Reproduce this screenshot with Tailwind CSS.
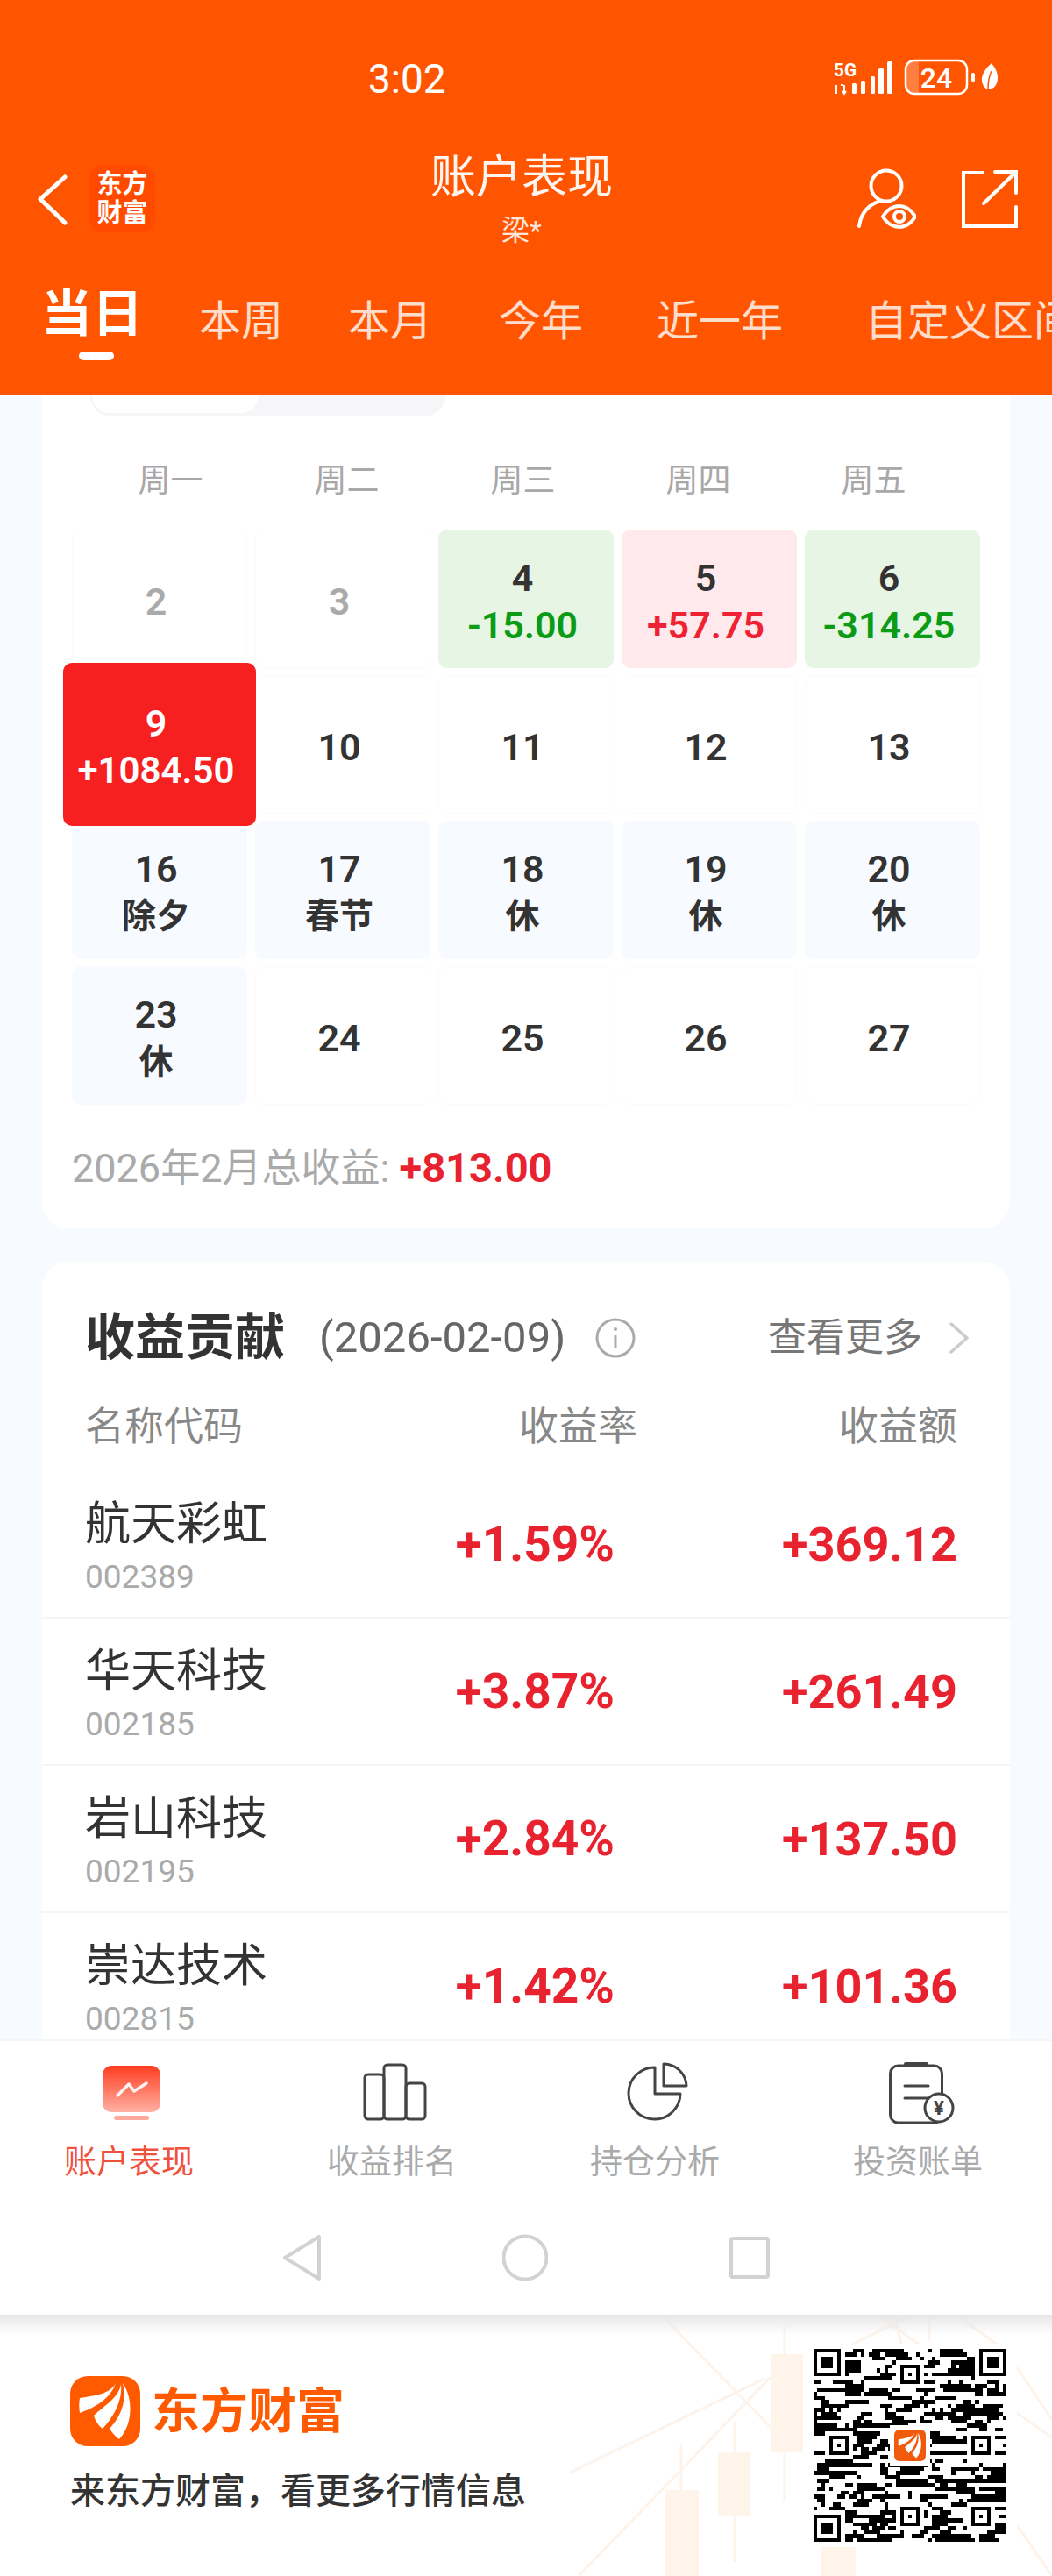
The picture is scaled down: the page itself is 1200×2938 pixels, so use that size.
<!DOCTYPE html>
<html lang="zh-CN">
<head>
  <meta charset="UTF-8" />
  <meta name="viewport" content="width=device-width, initial-scale=1.0" />
  <title>账户表现</title>
  <script src="https://cdn.jsdelivr.net/npm/@tailwindcss/browser@4"></script>
</head>
<body class="[font-family:Roboto,'Noto_Sans_CJK_SC',sans-serif] bg-white text-[#333]">
  <div class="w-[1200px] h-[2938px] flex flex-col overflow-hidden">

    <!-- Header -->
    <header class="h-[451px] shrink-0 bg-[#ff5500] text-white overflow-hidden">
      <!-- Status bar -->
      <div class="h-[180px] flex items-center pl-[420px] pr-[55px]">
        <span class="text-[46px] leading-none">3:02</span>
        <svg class="ml-auto" width="195" height="50" viewBox="0 0 195 50" fill="#fff">
          <text x="1" y="22" font-size="21" font-weight="700" textLength="26" lengthAdjust="spacingAndGlyphs" fill="#fff">5G</text>
          <path d="M4 32v10M9 32l3 0M13 32v10M11 39l2 3 2-3" stroke="#fff" stroke-width="2" fill="none"/>
          <rect x="22" y="30" width="5" height="12" rx="1.5"/>
          <rect x="32" y="27" width="5" height="15" rx="1.5"/>
          <rect x="43" y="22" width="5" height="20" rx="1.5"/>
          <rect x="52" y="13" width="6" height="29" rx="1.5"/>
          <rect x="62" y="5" width="6" height="37" rx="1.5"/>
          <path d="M93 4H98V42H93A10 10 0 0 1 83 32V14A10 10 0 0 1 93 4Z" fill="#fff" fill-opacity=".25"/>
          <rect x="83" y="4" width="70" height="38" rx="10" fill="none" stroke="#fff" stroke-width="2.5"/>
          <text x="118" y="35" font-size="32" font-weight="500" text-anchor="middle" fill="#fff">24</text>
          <rect x="158" y="18" width="4" height="10" rx="1.5"/>
          <path d="M181 7C173 14 169 21 170 28C171 33 174 36 177 37C184 37 188 31 188 24C188 17 185 12 181 7Z"/>
          <path d="M177 37C177 29 178 22 181 16" stroke="#ff5500" stroke-width="1.5" fill="none"/>
        </svg>
      </div>

      <!-- Title row -->
      <div class="relative h-[110px] flex items-start pl-[43px] pr-[38px]">
        <svg class="mt-[19px]" width="34" height="58" viewBox="0 0 34 58" fill="none" stroke="#fff" stroke-width="5" stroke-linecap="round" stroke-linejoin="round">
          <path d="M31 3L3 28L31 55"/>
        </svg>
        <div class="ml-[25px] mt-[8px] w-[75px] h-[77px] rounded-[15px] bg-[#ff4a00] flex flex-col items-center justify-center text-[29px] font-bold leading-[33px]">
          <span>东方</span>
          <span>财富</span>
        </div>
        <div class="absolute left-[0px] w-[1190px] top-0 flex flex-col items-center">
          <span class="text-[52px] leading-[46px] text-white/95">账户表现</span>
          <span class="text-[32px] leading-[36px] mt-[19px] text-white/85">梁*</span>
        </div>
        <svg class="ml-auto mt-[10px]" width="70" height="75" viewBox="0 0 70 75" fill="none" stroke="#fff" stroke-width="4" stroke-linecap="round">
          <circle cx="36" cy="22" r="17.5"/>
          <path d="M5 68C7 53 16 43 30 39"/>
          <path d="M32 57C37 49 44 45 51 45C58 45 64 49 69 57C64 65 58 69 51 69C44 69 37 65 32 57Z" fill="#ff5500"/>
          <circle cx="51" cy="57" r="6"/>
        </svg>
        <svg class="ml-[51px] mt-[10px]" width="66" height="72" viewBox="0 0 66 72" fill="none" stroke="#fff" stroke-width="4" stroke-linecap="round">
          <path d="M25 7H3V68H63V46"/>
          <path d="M26 42L61 8"/>
          <path d="M39 6H63V30"/>
        </svg>
      </div>

      <!-- Period tabs -->
      <nav class="h-[161px] flex items-start pl-[47px] whitespace-nowrap overflow-hidden">
        <div class="flex flex-col items-center">
          <span class="mt-[34px] text-[58px] leading-[68px] font-bold">当日</span>
          <span class="mt-[9px] ml-[9px] w-[40px] h-[10px] rounded-full bg-white"></span>
        </div>
        <span class="ml-[64px] mt-[47px] text-[48px] leading-[60px] text-white/80">本周</span>
        <span class="ml-[74px] mt-[47px] text-[48px] leading-[60px] text-white/80">本月</span>
        <span class="ml-[76px] mt-[47px] text-[48px] leading-[60px] text-white/80">今年</span>
        <span class="ml-[84px] mt-[47px] text-[48px] leading-[60px] text-white/80">近一年</span>
        <span class="ml-[94px] mt-[47px] text-[48px] leading-[60px] text-white/80">自定义区间</span>
      </nav>
    </header>

    <!-- Scroll area -->
    <main class="h-[1875px] shrink-0 bg-[#f7faff] overflow-hidden px-[48px]">
      <!-- Calendar card -->
      <section class="bg-white rounded-b-[30px] h-[950px]">
        <div class="ml-[55px] w-[405px] h-[24px] bg-[#f6f6f8] rounded-b-[24px]">
          <div class="ml-[2px] w-[190px] h-[20px] bg-white rounded-b-[20px]"></div>
        </div>

        <div class="mt-[54px] pl-[46px] flex text-[37px] leading-[40px] text-[#a8a8a8]">
          <span class="w-[201px] text-center">周一</span>
          <span class="w-[201px] text-center">周二</span>
          <span class="w-[201px] text-center">周三</span>
          <span class="w-[199px] text-center">周四</span>
          <span class="w-[201px] text-center">周五</span>
        </div>

        <div class="mt-[35px] mx-[34px] grid grid-cols-5 gap-x-[9px] gap-y-[8px] auto-rows-[158px] text-[43px] leading-[54px] font-semibold text-[#333]">
          <div class="rounded-[10px] border border-[#fdfafb] pr-2 pt-[6px] flex flex-col items-center justify-center text-[#aaa]"><span>2</span></div>
          <div class="rounded-[10px] border border-[#fdfafb] pr-2 pt-[6px] flex flex-col items-center justify-center text-[#aaa]"><span>3</span></div>
          <div class="rounded-[10px] bg-[#e6f5e4] pr-2 pt-[6px] flex flex-col items-center justify-center"><span>4</span><span class="text-[#0b9b14]">-15.00</span></div>
          <div class="rounded-[10px] bg-[#ffe9ec] pr-2 pt-[6px] flex flex-col items-center justify-center"><span>5</span><span class="text-[#ee2233]">+57.75</span></div>
          <div class="rounded-[10px] bg-[#e6f5e4] pr-2 pt-[6px] flex flex-col items-center justify-center"><span>6</span><span class="text-[#0b9b14]">-314.25</span></div>

          <div class="relative">
            <div class="absolute z-10 -left-[10px] -right-[10px] -top-[14px] -bottom-[14px] rounded-[10px] bg-[#f72020] text-white pr-2 pt-[6px] flex flex-col items-center justify-center"><span>9</span><span class="text-[42px]">+1084.50</span></div>
          </div>
          <div class="rounded-[10px] border border-[#fdfafb] pr-2 pt-[6px] flex flex-col items-center justify-center"><span>10</span></div>
          <div class="rounded-[10px] border border-[#fdfafb] pr-2 pt-[6px] flex flex-col items-center justify-center"><span>11</span></div>
          <div class="rounded-[10px] border border-[#fdfafb] pr-2 pt-[6px] flex flex-col items-center justify-center"><span>12</span></div>
          <div class="rounded-[10px] border border-[#fdfafb] pr-2 pt-[6px] flex flex-col items-center justify-center"><span>13</span></div>

          <div class="rounded-[10px] bg-[#f7faff] pr-2 pt-[6px] flex flex-col items-center justify-center"><span>16</span><span class="text-[39px]">除夕</span></div>
          <div class="rounded-[10px] bg-[#f7faff] pr-2 pt-[6px] flex flex-col items-center justify-center"><span>17</span><span class="text-[39px]">春节</span></div>
          <div class="rounded-[10px] bg-[#f7faff] pr-2 pt-[6px] flex flex-col items-center justify-center"><span>18</span><span class="text-[39px]">休</span></div>
          <div class="rounded-[10px] bg-[#f7faff] pr-2 pt-[6px] flex flex-col items-center justify-center"><span>19</span><span class="text-[39px]">休</span></div>
          <div class="rounded-[10px] bg-[#f7faff] pr-2 pt-[6px] flex flex-col items-center justify-center"><span>20</span><span class="text-[39px]">休</span></div>

          <div class="rounded-[10px] bg-[#f7faff] pr-2 pt-[6px] flex flex-col items-center justify-center"><span>23</span><span class="text-[39px]">休</span></div>
          <div class="rounded-[10px] border border-[#fdfafb] pr-2 pt-[6px] flex flex-col items-center justify-center"><span>24</span></div>
          <div class="rounded-[10px] border border-[#fdfafb] pr-2 pt-[6px] flex flex-col items-center justify-center"><span>25</span></div>
          <div class="rounded-[10px] border border-[#fdfafb] pr-2 pt-[6px] flex flex-col items-center justify-center"><span>26</span></div>
          <div class="rounded-[10px] border border-[#fdfafb] pr-2 pt-[6px] flex flex-col items-center justify-center"><span>27</span></div>
        </div>

        <p class="mt-[42px] pl-[34px] text-[45px] leading-[60px] text-[#aaa] whitespace-nowrap">2026年2月总收益: <span class="font-bold text-[47px] text-[#e8222e]">+813.00</span></p>
      </section>

      <!-- Contribution card -->
      <section class="mt-[38px] bg-white rounded-t-[30px] pt-[57px] h-[900px]">
        <div class="flex items-center h-[60px] pl-[49px] pr-[46px]">
          <h2 class="text-[57px] leading-[60px] font-bold text-[#333]">收益贡献</h2>
          <span class="ml-[39px] text-[49px] text-[#666]">(2026-02-09)</span>
          <svg class="ml-[34px]" width="46" height="46" viewBox="0 0 46 46" fill="none" stroke="#aaa" stroke-width="3">
            <circle cx="23" cy="23" r="21"/>
            <path d="M23 20V34" stroke-width="3"/>
            <circle cx="23" cy="13" r="1" fill="#aaa" stroke-width="2"/>
          </svg>
          <span class="ml-auto text-[44px] text-[#777]">查看更多</span>
          <svg class="ml-[30px]" width="24" height="38" viewBox="0 0 24 38" fill="none" stroke="#ccc" stroke-width="3.5" stroke-linecap="round" stroke-linejoin="round">
            <path d="M3 3L21 19L3 35"/>
          </svg>
        </div>

        <div class="mt-[47px] h-[50px] pl-[49px] pr-[60px] flex text-[45px] leading-[50px] text-[#888]">
          <span class="w-[480px] whitespace-nowrap">名称代码</span>
          <span class="w-[150px] text-right">收益率</span>
          <span class="flex-1 text-right">收益额</span>
        </div>

        <div class="mt-[25px]">
          <div class="h-[168px] border-b-2 border-[#f5f5f5] pl-[49px] pr-[60px] flex items-center">
            <div class="w-[400px] pt-[16px]">
              <div class="text-[52px] leading-[60px] text-[#333]">航天彩虹</div>
              <div class="text-[37px] leading-[60px] text-[#aaa]">002389</div>
            </div>
            <div class="w-[204px] text-right text-[55px] font-bold text-[#e8222e]">+1.59%</div>
            <div class="flex-1 text-right text-[54px] font-bold text-[#e8222e]">+369.12</div>
          </div>
          <div class="h-[168px] border-b-2 border-[#f5f5f5] pl-[49px] pr-[60px] flex items-center">
            <div class="w-[400px] pt-[16px]">
              <div class="text-[52px] leading-[60px] text-[#333]">华天科技</div>
              <div class="text-[37px] leading-[60px] text-[#aaa]">002185</div>
            </div>
            <div class="w-[204px] text-right text-[55px] font-bold text-[#e8222e]">+3.87%</div>
            <div class="flex-1 text-right text-[54px] font-bold text-[#e8222e]">+261.49</div>
          </div>
          <div class="h-[168px] border-b-2 border-[#f5f5f5] pl-[49px] pr-[60px] flex items-center">
            <div class="w-[400px] pt-[16px]">
              <div class="text-[52px] leading-[60px] text-[#333]">岩山科技</div>
              <div class="text-[37px] leading-[60px] text-[#aaa]">002195</div>
            </div>
            <div class="w-[204px] text-right text-[55px] font-bold text-[#e8222e]">+2.84%</div>
            <div class="flex-1 text-right text-[54px] font-bold text-[#e8222e]">+137.50</div>
          </div>
          <div class="h-[168px] border-b-2 border-[#f5f5f5] pl-[49px] pr-[60px] flex items-center">
            <div class="w-[400px] pt-[16px]">
              <div class="text-[52px] leading-[60px] text-[#333]">崇达技术</div>
              <div class="text-[37px] leading-[60px] text-[#aaa]">002815</div>
            </div>
            <div class="w-[204px] text-right text-[55px] font-bold text-[#e8222e]">+1.42%</div>
            <div class="flex-1 text-right text-[54px] font-bold text-[#e8222e]">+101.36</div>
          </div>
        </div>
      </section>
    </main>

    <!-- Bottom tabs and system nav -->
    <footer class="h-[314px] shrink-0 bg-white border-t-2 border-[#f8f4f4]">
      <div class="grid grid-cols-4 pt-[24px]">
        <div class="flex flex-col items-center">
          <svg class="overflow-visible" width="72" height="72" viewBox="0 0 72 72">
            <defs>
              <linearGradient id="tabRed" x1="0" y1="0" x2="0" y2="1">
                <stop offset="0" stop-color="#ff3d1f"/>
                <stop offset="1" stop-color="#ffb0a4"/>
              </linearGradient>
            </defs>
            <rect x="3" y="4" width="66" height="53" rx="10" fill="url(#tabRed)"/>
            <rect x="16" y="61" width="40" height="5" rx="2.5" fill="#ffa99c"/>
            <path d="M20 38L33 25L39 33L53 24" fill="none" stroke="#fff" stroke-width="3.5" stroke-linecap="round" stroke-linejoin="round" stroke-opacity=".9"/>
          </svg>
          <span class="mt-[18px] pr-[6px] text-[37px] leading-[50px] text-[#f0503c]">账户表现</span>
        </div>
        <div class="flex flex-col items-center">
          <svg class="overflow-visible" width="72" height="72" viewBox="0 0 72 72" fill="none" stroke="#444" stroke-width="3">
            <rect x="2" y="14" width="22" height="51" rx="4"/>
            <rect x="24" y="3" width="25" height="62" rx="4"/>
            <rect x="49" y="24" width="22" height="41" rx="4"/>
          </svg>
          <span class="mt-[18px] pr-[6px] text-[37px] leading-[50px] text-[#aaa]">收益排名</span>
        </div>
        <div class="flex flex-col items-center">
          <svg class="overflow-visible" width="72" height="72" viewBox="0 0 72 72" fill="none" stroke="#444" stroke-width="3" stroke-linejoin="round">
            <path d="M33 6A29.5 29.5 0 1 0 62 36H33Z"/>
            <path d="M43 2A26 26 0 0 1 69 27H43Z"/>
          </svg>
          <span class="mt-[18px] pr-[6px] text-[37px] leading-[50px] text-[#aaa]">持仓分析</span>
        </div>
        <div class="flex flex-col items-center">
          <svg class="overflow-visible" width="72" height="72" viewBox="0 0 72 72" fill="none" stroke="#444" stroke-width="3" stroke-linecap="round">
            <rect x="1.5" y="4" width="59" height="65" rx="9"/>
            <path d="M19 2H43" stroke-width="4"/>
            <path d="M18 27H45M18 41H45"/>
            <circle cx="57" cy="52" r="16" fill="#fff"/>
            <text x="57" y="60" font-size="22" font-weight="700" text-anchor="middle" fill="#444" stroke="none">¥</text>
          </svg>
          <span class="mt-[18px] pr-[6px] text-[37px] leading-[50px] text-[#aaa]">投资账单</span>
        </div>
      </div>
      <div class="mt-[56px] flex justify-center gap-[207px]">
        <svg width="44" height="54" viewBox="0 0 44 54" fill="none" stroke="#d2d2d2" stroke-width="4" stroke-linejoin="round">
          <path d="M42 3L3 27L42 51Z"/>
        </svg>
        <svg width="52" height="54" viewBox="0 0 52 54" fill="none" stroke="#d2d2d2" stroke-width="4">
          <circle cx="26" cy="27" r="24.5"/>
        </svg>
        <svg width="46" height="54" viewBox="0 0 46 54" fill="none" stroke="#d2d2d2" stroke-width="4">
          <rect x="2" y="5" width="42" height="44" rx="2"/>
        </svg>
      </div>
    </footer>

    <!-- Promo strip -->
    <section class="relative h-[298px] shrink-0 bg-white flex justify-between overflow-hidden">
      <svg class="absolute left-0 top-0" width="1200" height="298" viewBox="0 0 1200 298" fill="none">
        <defs>
          <symbol id="wing" viewBox="0 0 80 80">
            <path fill="#fff" d="M52 8C46 20 30 22 11 25C10 31 10 36 11 42C28 36 46 26 52 8Z"/>
            <path fill="#fff" d="M58 9C56 24 40 33 27 45C29 52 33 57 37 60C48 48 60 30 58 9Z"/>
            <path fill="#fff" d="M60 8C72 25 72 55 56 72C52 69 48 65 45 60C58 46 65 28 60 8Z"/>
          </symbol>
          <linearGradient id="topShade" x1="0" y1="0" x2="0" y2="1">
            <stop offset="0" stop-color="#e6e6e6"/>
            <stop offset="1" stop-color="#e6e6e6" stop-opacity="0"/>
          </linearGradient>
        </defs>
        <g stroke="#fdf3ea" stroke-width="3">
          <path d="M754 0L903 153"/>
          <path d="M650 180L872 73"/>
          <path d="M660 298L880 70"/>
          <path d="M1200 140L1000 0"/>
          <path d="M960 40L1040 0M1090 0L1160 50M1020 0L1030 40M1060 0L1060 30"/>
          <path d="M1160 60L1200 120M1160 240L1200 298"/>
          <path d="M777 147V200M838 122V282M895 13V212"/>
        </g>
        <g fill="#fff4ea">
          <rect x="758" y="200" width="39" height="98"/>
          <rect x="819" y="157" width="37" height="72"/>
          <rect x="879" y="45" width="37" height="112"/>
          <rect x="937" y="265" width="39" height="33"/>
        </g>
        <rect x="0" y="0" width="1200" height="23" fill="url(#topShade)"/>
      </svg>

      <div class="relative pl-[80px] pt-[70px]">
        <div class="flex items-center">
          <svg width="80" height="80" viewBox="0 0 80 80">
            <rect width="80" height="80" rx="20" fill="#ff5a00"/>
            <use href="#wing" width="80" height="80"/>
          </svg>
          <span class="ml-[13px] text-[55px] leading-[80px] font-bold text-[#ff5a00]">东方财富</span>
        </div>
        <p class="mt-[27px] text-[40px] leading-[50px] font-medium text-[#333] whitespace-nowrap">来东方财富，看更多行情信息</p>
      </div>

      <div class="relative mt-[33px] mr-[40px] self-start bg-white px-[12px] py-[6px]">
        <svg id="qr" class="block" width="220" height="220" viewBox="0 0 220 220" shape-rendering="crispEdges"></svg>
      </div>
    </section>
  </div>

  <script>
    // qr code pattern, drawn as one path
    const N = 49;
    const S = 220 / N;
    let seed = 0x3a5c;
    function nextBit() {
      const bit = ((seed >> 0) ^ (seed >> 2) ^ (seed >> 3) ^ (seed >> 5)) & 1;
      seed = (seed >> 1) | (bit << 15);
      return ((seed ^ (seed >> 7)) & 3) > 1;
    }
    const cells = [];
    for (let y = 0; y < N; y++) {
      cells.push([]);
      for (let x = 0; x < N; x++) {
        // repeat the left neighbour now and then, real codes have longer runs
        const repeat = x > 0 && nextBit();
        cells[y].push(repeat ? cells[y][x - 1] : nextBit());
      }
    }
    function stamp(x0, y0, size) {
      for (let y = -1; y <= size; y++) {
        for (let x = -1; x <= size; x++) {
          if (y + y0 < 0 || x + x0 < 0 || y + y0 >= N || x + x0 >= N) continue;
          const d = Math.min(x, y, size - 1 - x, size - 1 - y);
          cells[y + y0][x + x0] = d === 0 || d >= 2;
          if (d < 0) cells[y + y0][x + x0] = false;
        }
      }
    }
    stamp(0, 0, 7);
    stamp(N - 7, 0, 7);
    stamp(0, N - 7, 7);
    [[6, 24], [24, 6], [42, 24], [24, 42], [42, 42]].forEach(p => stamp(p[0] - 2, p[1] - 2, 5));

    let d = '';
    cells.forEach((row, y) => row.forEach((on, x) => {
      if (on) d += 'M' + (x * S).toFixed(2) + ' ' + (y * S).toFixed(2) + 'h' + S.toFixed(2) + 'v' + S.toFixed(2) + 'h-' + S.toFixed(2) + 'z';
    }));

    document.getElementById('qr').innerHTML =
      '<path fill="#000" d="' + d + '"/>' +
      '<g shape-rendering="auto"><rect x="87" y="87" width="46" height="46" fill="#fff"/>' +
      '<rect x="92" y="92" width="36" height="36" rx="6" fill="#f05a0a"/>' +
      '<use href="#wing" x="92" y="92" width="36" height="36"/></g>';
  </script>
</body>
</html>
